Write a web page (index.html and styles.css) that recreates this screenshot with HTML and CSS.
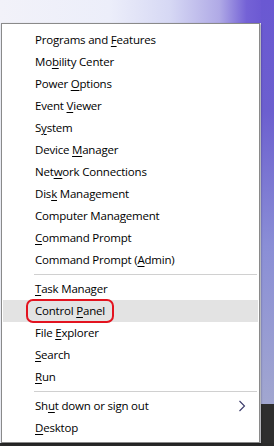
FILE: index.html
```html
<!DOCTYPE html>
<html lang="en">
<head>
  <meta charset="UTF-8" />
  <title>Quick Link Menu</title>
  <link rel="stylesheet" href="styles.css">
</head>
<body>
  <div class="menu">
    <div class="item">Programs and <u>F</u>eatures</div>
    <div class="item">Mo<u>b</u>ility Center</div>
    <div class="item">Power <u>O</u>ptions</div>
    <div class="item">Event <u>V</u>iewer</div>
    <div class="item">S<u>y</u>stem</div>
    <div class="item">Device <u>M</u>anager</div>
    <div class="item">Net<u>w</u>ork Connections</div>
    <div class="item">Dis<u>k</u> Management</div>
    <div class="item">Computer Mana<u>g</u>ement</div>
    <div class="item"><u>C</u>ommand Prompt</div>
    <div class="item">Command Prompt (<u>A</u>dmin)</div>
    <div class="sep"></div>
    <div class="item"><u>T</u>ask Manager</div>
    <div class="item active"><span class="circled">Control <u>P</u>anel</span></div>
    <div class="item">File <u>E</u>xplorer</div>
    <div class="item"><u>S</u>earch</div>
    <div class="item"><u>R</u>un</div>
    <div class="sep"></div>
    <div class="item">Sh<u>u</u>t down or sign out
      <svg class="arrow" width="8" height="12" viewBox="0 0 8 12"><path d="M1.5 1 L6.5 6 L1.5 11" fill="none" stroke="#3a3a6a" stroke-width="1.1"/></svg>
    </div>
    <div class="item"><u>D</u>esktop</div>
  </div>
</body>
</html>
```

FILE: styles.css
```css
html, body {
  margin: 0;
  height: 100%;
}
body {
  font-family: 'Open Sans', 'Noto Sans', sans-serif;
  font-size: 11.5px;
  letter-spacing: -0.2px;
  color: #000;
  overflow: hidden;
  background:
    linear-gradient(#2b2b2b, #2b2b2b) 0 443px / 100% 3px no-repeat,
    linear-gradient(#2e2e2e, #2e2e2e) 261px 404px / 13px 42px no-repeat,
    linear-gradient(180deg, #6a58d2 0, #6c5fcf 25%, #8a8ed6 55%, #a1a6d0 90%) 261px 0 / 13px 100% no-repeat,
    linear-gradient(90deg, #f2f2f9 0, #eceefa 40%, #d6d8f4 62%, #b0aae6 80%, #7462d6 90%, #6652d0 100%) 0 0 / 100% 23px no-repeat,
    #eef0f8;
}
.menu {
  margin: 23px 0 0 1px;
  width: 257px;
  padding: 5px 0 3px;
  background: #fff;
  border: 1px solid #8a8a8a;
  box-shadow: 1px 1px 2px rgba(0, 0, 0, 0.35);
}
.item {
  position: relative;
  height: 22px;
  line-height: 22px;
  padding-left: 32px;
  margin: 0 1px;
  white-space: nowrap;
}
.item u {
  text-underline-offset: 2px;
}
.item.active {
  background: #e3e3e3;
}
.circled {
  display: inline-block;
  margin-left: -9px;
  padding: 0 7px;
  height: 20px;
  line-height: 20px;
  border: 2px solid #e3131f;
  border-radius: 7px;
  margin-top: -1px;
  vertical-align: top;
}
.arrow {
  position: absolute;
  right: 12px;
  top: 5px;
}
.sep {
  height: 1px;
  margin: 3px 2px 3px 32px;
  background: #d0d0d0;
}
```
